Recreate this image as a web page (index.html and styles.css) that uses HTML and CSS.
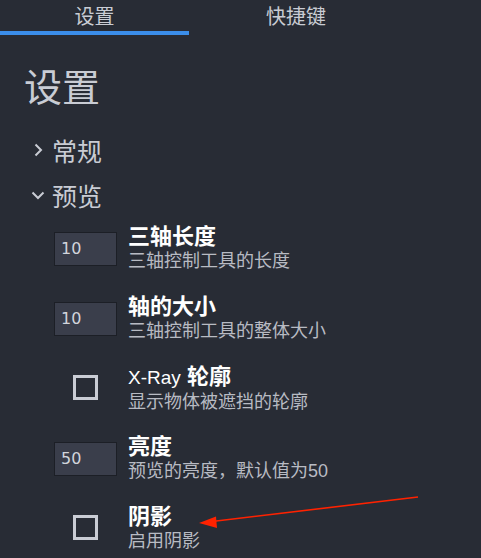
FILE: index.html
```html
<!DOCTYPE html>
<html lang="zh-CN">
<head>
<meta charset="utf-8">
<title>设置</title>
<link rel="stylesheet" href="styles.css">
</head>
<body>
<div class="tabs">
  <div class="tab tab-settings active">设置</div>
  <div class="tab tab-keys">快捷键</div>
</div>
<div class="content">
  <h1 class="title">设置</h1>
  <div class="section">
    <svg class="chev" width="14" height="14" viewBox="0 0 14 14"><path d="M4.5 1.5 L10 7 L4.5 12.5" fill="none" stroke="#c9ccd4" stroke-width="2"/></svg>
    <span>常规</span>
  </div>
  <div class="section">
    <svg class="chev" width="14" height="14" viewBox="0 0 14 14"><path d="M1.5 4.5 L7 10 L12.5 4.5" fill="none" stroke="#c9ccd4" stroke-width="2"/></svg>
    <span>预览</span>
  </div>
  <div class="items">
    <div class="item">
      <div class="control"><div class="input">10</div></div>
      <div class="text"><div class="label">三轴长度</div><div class="desc">三轴控制工具的长度</div></div>
    </div>
    <div class="item">
      <div class="control"><div class="input">10</div></div>
      <div class="text"><div class="label">轴的大小</div><div class="desc">三轴控制工具的整体大小</div></div>
    </div>
    <div class="item">
      <div class="control"><div class="checkbox"></div></div>
      <div class="text"><div class="label"><span class="latin">X-Ray</span> 轮廓</div><div class="desc">显示物体被遮挡的轮廓</div></div>
    </div>
    <div class="item">
      <div class="control"><div class="input">50</div></div>
      <div class="text"><div class="label">亮度</div><div class="desc">预览的亮度，默认值为50</div></div>
    </div>
    <div class="item">
      <div class="control"><div class="checkbox"></div></div>
      <div class="text"><div class="label">阴影</div><div class="desc">启用阴影</div></div>
    </div>
  </div>
</div>
<svg class="arrow" width="481" height="558" viewBox="0 0 481 558">
  <line x1="418" y1="497" x2="212" y2="521.5" stroke="#ff2200" stroke-width="1.6"/>
  <polygon points="199,523 216,516.5 217,528" fill="#ff2200"/>
</svg>
</body>
</html>
```

FILE: styles.css
```css
html, body {
  margin: 0;
  padding: 0;
}
body {
  background: #282c35;
  width: 481px;
  height: 558px;
  overflow: hidden;
  position: relative;
  font-family: "Noto Sans CJK SC", "DejaVu Sans", sans-serif;
  color: #c9ccd4;
}
.tabs {
  display: flex;
  height: 35px;
}
.tab {
  font-size: 20px;
  line-height: 31px;
  text-align: center;
  color: #c9ccd4;
  box-sizing: border-box;
  height: 35px;
}
.tab-settings { width: 189px; }
.tab-keys { width: 214px; }
.tab.active {
  border-bottom: 4px solid #3b8eea;
}
.content {
  padding-left: 25px;
}
.title {
  margin: 27px 0 0 -1px;
  font-size: 38px;
  line-height: 46px;
  font-weight: normal;
  color: #c9ccd4;
}
.section {
  display: flex;
  align-items: center;
  height: 45px;
  padding-left: 6px;
  font-size: 25px;
  color: #c9ccd4;
}
.title + .section { margin-top: 19px; }
.chev {
  width: 14px;
  height: 14px;
  margin-right: 7px;
  flex: none;
}
.items {
  margin-top: 4px;
  padding-left: 29px;
}
.item {
  display: flex;
  align-items: flex-start;
  height: 70px;
}
.control {
  width: 63px;
  margin-right: 11px;
  display: flex;
  justify-content: center;
  flex: none;
}
.input {
  width: 63px;
  height: 34px;
  box-sizing: border-box;
  margin-top: 11px;
  background: #3a3e4b;
  border: 1px solid #1c1f26;
  font-family: "DejaVu Sans", sans-serif;
  font-size: 16px;
  line-height: 32px;
  padding-left: 6px;
  color: #d2d5dc;
}
.checkbox {
  width: 25px;
  height: 25px;
  box-sizing: border-box;
  margin-top: 14px;
  border: 3px solid #c9ccd4;
}
.text {
  display: flex;
  flex-direction: column;
  padding-top: 2px;
  font-family: "Liberation Sans", "Noto Sans CJK SC", sans-serif;
}
.label {
  font-size: 22px;
  line-height: 27px;
  font-weight: bold;
  color: #ffffff;
}
.latin {
  font-weight: normal;
  font-size: 19px;
}
.desc {
  font-size: 18px;
  line-height: 22px;
  color: #b8bbc3;
}
.arrow {
  position: absolute;
  left: 0;
  top: 0;
  pointer-events: none;
}
```
